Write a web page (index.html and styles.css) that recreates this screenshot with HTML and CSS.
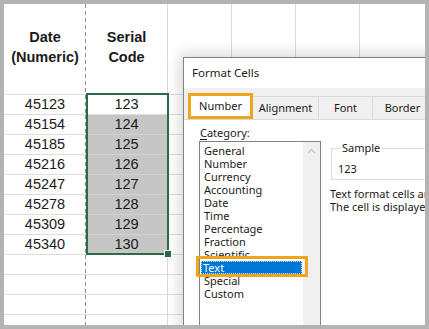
FILE: index.html
```html
<!DOCTYPE html>
<html>
<head>
<meta charset="utf-8">
<link rel="stylesheet" href="styles.css">
</head>
<body>
<div class="frame">
  <div class="sheet">
    <div class="grid">
      <div class="c a hdr">Date<br>(Numeric)</div>
      <div class="c b hdr">Serial<br>Code</div>
      <div class="c n hdr"></div><div class="c n hdr"></div><div class="c n hdr"></div><div class="c n hdr"></div>

      <div class="c a">45123</div><div class="c b">123</div>
      <div class="c n"></div><div class="c n"></div><div class="c n"></div><div class="c n"></div>
      <div class="c a">45154</div><div class="c b sel">124</div>
      <div class="c n"></div><div class="c n"></div><div class="c n"></div><div class="c n"></div>
      <div class="c a">45185</div><div class="c b sel">125</div>
      <div class="c n"></div><div class="c n"></div><div class="c n"></div><div class="c n"></div>
      <div class="c a">45216</div><div class="c b sel">126</div>
      <div class="c n"></div><div class="c n"></div><div class="c n"></div><div class="c n"></div>
      <div class="c a">45247</div><div class="c b sel">127</div>
      <div class="c n"></div><div class="c n"></div><div class="c n"></div><div class="c n"></div>
      <div class="c a">45278</div><div class="c b sel">128</div>
      <div class="c n"></div><div class="c n"></div><div class="c n"></div><div class="c n"></div>
      <div class="c a">45309</div><div class="c b sel">129</div>
      <div class="c n"></div><div class="c n"></div><div class="c n"></div><div class="c n"></div>
      <div class="c a">45340</div><div class="c b sel">130</div>
      <div class="c n"></div><div class="c n"></div><div class="c n"></div><div class="c n"></div>

      <div class="c a"></div><div class="c b"></div>
      <div class="c n"></div><div class="c n"></div><div class="c n"></div><div class="c n"></div>
      <div class="c a"></div><div class="c b"></div>
      <div class="c n"></div><div class="c n"></div><div class="c n"></div><div class="c n"></div>
      <div class="c a"></div><div class="c b"></div>
      <div class="c n"></div><div class="c n"></div><div class="c n"></div><div class="c n"></div>
      <div class="c a"></div><div class="c b"></div>
      <div class="c n"></div><div class="c n"></div><div class="c n"></div><div class="c n"></div>
    </div>

    <div class="selection"><span class="handle"></span></div>

    <div class="dialog">
      <div class="title">Format Cells</div>
      <div class="tabstrip">
        <div class="tab active">Number</div>
        <div class="tab t-align">Alignment</div>
        <div class="tab t-font">Font</div>
        <div class="tab t-border">Border</div>
      </div>
      <div class="content">
        <div class="left">
          <div class="label"><u>C</u>ategory:</div>
          <div class="listbox">
            <ul class="items">
              <li>General</li>
              <li>Number</li>
              <li>Currency</li>
              <li>Accounting</li>
              <li>Date</li>
              <li>Time</li>
              <li>Percentage</li>
              <li>Fraction</li>
              <li>Scientific</li>
              <li class="picked"><span class="focus">Text</span></li>
              <li>Special</li>
              <li>Custom</li>
            </ul>
            <div class="scrollbar">
              <svg class="arrow" width="9" height="6" viewBox="0 0 9 6"><path d="M1 5 L4.5 1.5 L8 5" fill="none" stroke="#c4c4c4" stroke-width="1.3"/></svg>
            </div>
          </div>
        </div>
        <div class="right">
          <fieldset class="sample">
            <legend>Sample</legend>
            <div class="sample-val">123</div>
          </fieldset>
          <div class="desc">Text format cells are displayed as text even when a number is in the cell.<br>The cell is displayed exactly as entered.</div>
        </div>
      </div>
    </div>
  </div>
</div>
</body>
</html>
```
FILE: styles.css
```css
html, body {
  margin: 0;
  padding: 0;
}
.frame {
  width: 429px;
  height: 329px;
  box-sizing: border-box;
  padding: 4px;
  background: #b3b3b3;
}
.sheet {
  position: relative;
  width: 421px;
  height: 321px;
  overflow: hidden;
  background: #ffffff;
  font-family: "Liberation Sans", Arial, sans-serif;
  color: #1a1a1a;
}
.grid {
  display: grid;
  grid-template-columns: 82px 82px 64px 64px 64px 66px;
  grid-template-rows: 91px;
  grid-auto-rows: 20px;
}
.c {
  box-sizing: border-box;
  border-bottom: 1px solid #dedede;
  font-size: 14.5px;
  line-height: 19px;
  text-align: center;
}
.hdr {
  border-bottom: 1px solid #dedede;
  font-weight: bold;
  line-height: 20px;
  display: flex;
  align-items: center;
  justify-content: center;
  padding-bottom: 4px;
}
.a {
  background-image: linear-gradient(#8e8e8e 57%, transparent 57%);
  background-size: 1px 7px;
  background-repeat: repeat-y;
  background-position: right top;
}
.b {
  border-right: 1px solid #d9d9d9;
}
.n {
  border-right: 1px solid #dcdcdc;
}
.sel {
  background: #c6c6c6;
  border-bottom-color: #d2d2d2;
}
.selection {
  position: absolute;
  left: 82px;
  top: 89px;
  width: 83px;
  height: 162px;
  box-sizing: border-box;
  border: 2px solid #2a6b48;
}
.handle {
  position: absolute;
  right: -5px;
  bottom: -5px;
  width: 6px;
  height: 6px;
  background: #2a6b48;
  border: 1px solid #ffffff;
}

/* dialog */
.dialog {
  position: absolute;
  left: 179px;
  top: 53px;
  width: 260px;
  height: 300px;
  box-sizing: border-box;
  border: 1px solid #808080;
  background: #ffffff;
  box-shadow: 0 0 14px 3px rgba(0, 0, 0, 0.16);
  font-family: "Noto Sans", "Open Sans", sans-serif;
  font-size: 11px;
  color: #1a1a1a;
}
.title {
  height: 30px;
  line-height: 30px;
  padding-left: 8px;
  font-size: 11.5px;
}
.tabstrip {
  height: 32px;
  box-sizing: border-box;
  background: #f0f0f0;
  border-bottom: 1px solid #dadada;
  display: flex;
  align-items: flex-end;
  padding-left: 4px;
}
.tab {
  height: 23px;
  box-sizing: border-box;
  line-height: 21px;
  text-align: center;
  border: 1px solid #d9d9d9;
  border-bottom: none;
  border-left: none;
  background: #f0f0f0;
}
.tab.active {
  width: 65px;
  height: 26px;
  line-height: 20px;
  background: #ffffff;
  border: 3px solid #f0a51c;
}
.t-align { width: 66px; }
.t-font { width: 54px; }
.t-border { width: 60px; }

.content {
  display: flex;
  gap: 9px;
  padding: 5px 0 0 15px;
}
.left {
  width: 122px;
  flex: none;
}
.label {
  line-height: 15px;
  padding-left: 1px;
  margin-bottom: 1px;
}
.label u {
  text-decoration-thickness: 1px;
  text-underline-offset: 2px;
}
.listbox {
  position: relative;
  height: 200px;
  box-sizing: border-box;
  border: 1px solid #828282;
  display: flex;
}
.items {
  list-style: none;
  margin: 0;
  padding: 2px 0 0 1px;
  flex: 1;
}
.items li {
  height: 13px;
  line-height: 13px;
  padding-left: 3px;
  white-space: nowrap;
}
.items li.picked {
  position: relative;
  background: #0078d7;
  color: #ffffff;
  margin-right: 1px;
  padding-left: 0;
  z-index: 2;
}
.items li.picked::after {
  content: "";
  position: absolute;
  left: -5px;
  right: -6px;
  top: -5px;
  bottom: -3px;
  border: 3px solid #f0a51c;
}
.focus {
  display: block;
  height: 13px;
  box-sizing: border-box;
  padding-left: 2px;
  outline: 1px dotted rgba(255, 255, 255, 0.75);
  outline-offset: -1px;
}
.scrollbar {
  width: 17px;
  flex: none;
  background: #f0f0f0;
  display: flex;
  justify-content: center;
}
.arrow {
  margin-top: 6px;
}
.right {
  flex: 1;
  padding-top: 16px;
  white-space: nowrap;
}
.sample {
  margin: 0 0 0 1px;
  padding: 7px 0 3px 6px;
  border: 1px solid #dcdcdc;
  border-right: none;
  min-width: 0;
}
.sample legend {
  padding: 0 2px;
  margin-left: 2px;
  line-height: 14px;
}
.sample-val {
  line-height: 14px;
}
.desc {
  margin-top: 7px;
  line-height: 13px;
}
```
